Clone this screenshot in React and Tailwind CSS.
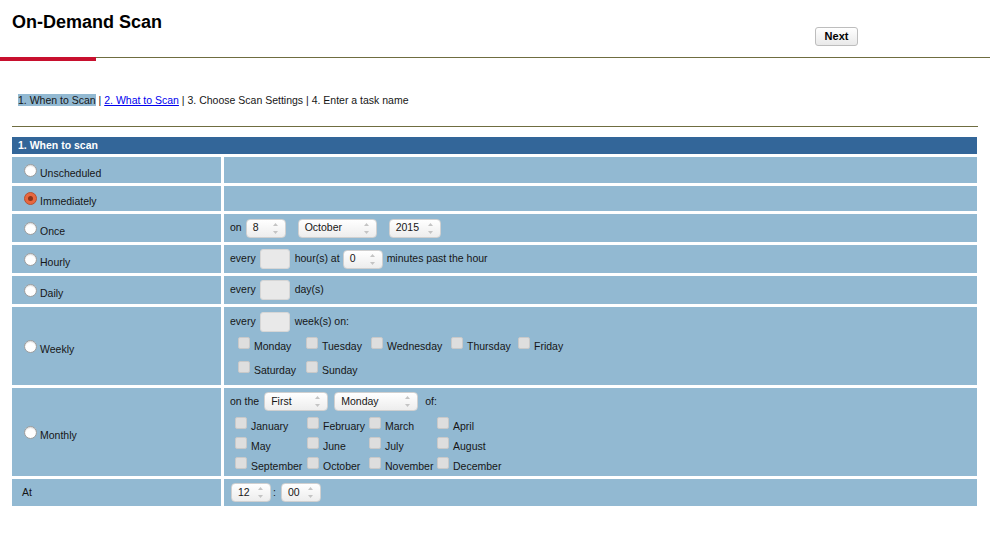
import React from "react";

const Radio = ({ checked }) =>
  checked ? (
    <span className="w-[13px] h-[13px] rounded-full border border-[#b8502f] bg-[#e8683f] flex items-center justify-center shrink-0">
      <span className="w-[5px] h-[5px] rounded-full bg-[#8c3319]" />
    </span>
  ) : (
    <span className="w-[13px] h-[13px] rounded-full border border-[#9c9c9c] bg-white shadow-[inset_0_1px_1px_rgba(0,0,0,0.15)] shrink-0" />
  );

const Arrows = () => (
  <svg width="7" height="15" viewBox="0 0 7 15" className="shrink-0">
    <path d="M1 5 L3.5 2 L6 5 Z" fill="#c4c4c4" />
    <path d="M1 10 L3.5 13 L6 10 Z" fill="#c4c4c4" />
  </svg>
);

const Spin = ({ value, className }) => (
  <div
    className={
      "h-[19px] rounded-[4px] border border-[#d0d0d0] bg-gradient-to-b from-white to-[#ededed] flex items-center justify-between pl-[6px] pr-[6px] shrink-0 " +
      className
    }
  >
    <span>{value}</span>
    <Arrows />
  </div>
);

const Box = () => (
  <span className="w-[30px] h-[20px] rounded-[3px] border border-[#d6d6d6] bg-[#e9e9e9] shrink-0" />
);

const Check = ({ label }) => (
  <div className="flex items-start">
    <span className="w-[12px] h-[12px] rounded-[2px] border border-[#c9c9c9] bg-[#dedede] shrink-0" />
    <span className="ml-[4px] mt-[3px] leading-[13px]">{label}</span>
  </div>
);

const Row = ({ label, radio, checked, h, children, right = "items-center" }) => (
  <div className={"flex gap-[3px] mt-[3px] " + h}>
    <div className={"w-[209px] bg-[#92b9d2] flex items-center " + (radio ? "pl-[12px]" : "pl-[10px]")}>
      {radio && <Radio checked={checked} />}
      <span className={radio ? "ml-[3px] mt-[7px]" : ""}>{label}</span>
    </div>
    <div className={"flex-1 bg-[#92b9d2] flex pl-[6px] " + right}>{children}</div>
  </div>
);

export default function App() {
  return (
    <div className="w-[990px] h-[540px] bg-white text-[10.5px] text-[#161616] font-['Liberation_Sans',Arial,sans-serif]">
      {/* title bar */}
      <div className="flex justify-between w-[858px] pl-[12px] h-[57px]">
        <h1 className="pt-[12px] text-[18px] leading-[21px] font-bold text-black">On-Demand Scan</h1>
        <button className="mt-[27px] h-[19px] w-[43px] rounded-[3px] border border-[#bdbdbd] bg-gradient-to-b from-white to-[#e9e9e9] font-bold text-[11px] text-black">
          Next
        </button>
      </div>
      <div className="flex items-start h-[4px]">
        <div className="w-[96px] h-[4px] bg-[#c8102e]" />
        <div className="flex-1 h-[1px] bg-[#6f6d40]" />
      </div>

      {/* steps */}
      <div className="mt-[33px] pl-[18px] leading-[13px]">
        <span className="bg-[#92b9d2]">1. When to Scan</span> |{" "}
        <a href="#" className="text-[#0000ee] underline">2. What to Scan</a> | 3. Choose Scan Settings | 4. Enter a task name
      </div>
      <div className="mt-[19px] ml-[12px] w-[966px] h-[1px] bg-[#6f6d40]" />

      {/* schedule table */}
      <div className="mt-[10px] ml-[12px] w-[965px]">
        <div className="h-[17px] bg-[#336699] text-white font-bold pl-[6px] leading-[17px]">1. When to scan</div>

        <Row label="Unscheduled" radio h="h-[26px]" />
        <Row label="Immediately" radio checked h="h-[25px]" />
        <Row label="Once" radio h="h-[28px]">
          <span>on</span>
          <Spin value="8" className="ml-[4px] w-[40px]" />
          <Spin value="October" className="ml-[12px] w-[79px]" />
          <Spin value="2015" className="ml-[12px] w-[52px]" />
        </Row>
        <Row label="Hourly" radio h="h-[28px]">
          <span>every</span>
          <span className="ml-[4px] flex"><Box /></span>
          <span className="ml-[5px]">hour(s) at</span>
          <Spin value="0" className="ml-[3px] w-[40px]" />
          <span className="ml-[4px]">minutes past the hour</span>
        </Row>
        <Row label="Daily" radio h="h-[28px]">
          <span>every</span>
          <span className="ml-[4px] flex"><Box /></span>
          <span className="ml-[5px]">day(s)</span>
        </Row>
        <Row label="Weekly" radio h="h-[78px]" right="flex-col pt-[5px]">
          <div className="flex items-center h-[20px]">
            <span>every</span>
            <span className="ml-[4px] flex"><Box /></span>
            <span className="ml-[5px]">week(s) on:</span>
          </div>
          <div className="grid grid-cols-[68px_65px_80px_67px_80px] gap-y-[8px] ml-[8px] mt-[5px]">
            <Check label="Monday" />
            <Check label="Tuesday" />
            <Check label="Wednesday" />
            <Check label="Thursday" />
            <Check label="Friday" />
            <Check label="Saturday" />
            <Check label="Sunday" />
          </div>
        </Row>
        <Row label="Monthly" radio h="h-[88px]" right="flex-col pt-[4px]">
          <div className="flex items-center h-[19px]">
            <span>on the</span>
            <Spin value="First" className="ml-[5px] w-[64px]" />
            <Spin value="Monday" className="ml-[6px] w-[84px]" />
            <span className="ml-[7px]">of:</span>
          </div>
          <div className="grid grid-cols-[72px_62px_68px_80px] gap-y-[4px] ml-[5px] mt-[6px]">
            <Check label="January" />
            <Check label="February" />
            <Check label="March" />
            <Check label="April" />
            <Check label="May" />
            <Check label="June" />
            <Check label="July" />
            <Check label="August" />
            <Check label="September" />
            <Check label="October" />
            <Check label="November" />
            <Check label="December" />
          </div>
        </Row>
        <Row label="At" h="h-[27px]">
          <Spin value="12" className="ml-[1px] w-[40px]" />
          <span className="ml-[2px]">:</span>
          <Spin value="00" className="ml-[5px] w-[40px]" />
        </Row>
      </div>
    </div>
  );
}
